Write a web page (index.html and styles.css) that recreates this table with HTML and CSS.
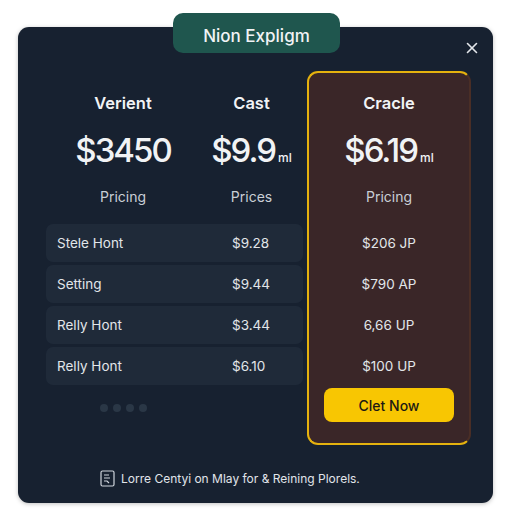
FILE: index.html
```html
<!DOCTYPE html>
<html lang="en">
<head>
    <meta charset="UTF-8">
    <title>Nion Expligm</title>
    <link rel="stylesheet" href="styles.css">
</head>
<body>
    <div class="modal">
        <div class="tab">Nion Expligm</div>
        <button class="close" aria-label="Close">
            <svg width="12" height="12" viewBox="0 0 12 12" stroke="currentColor" stroke-width="1.6" stroke-linecap="round">
                <line x1="1.5" y1="1.5" x2="10.5" y2="10.5"/>
                <line x1="10.5" y1="1.5" x2="1.5" y2="10.5"/>
            </svg>
        </button>

        <div class="plans">
            <div class="plans-left">
                <div class="head">
                    <div class="plan">
                        <div class="name">Verient</div>
                        <div class="price">$3450</div>
                        <div class="label">Pricing</div>
                    </div>
                    <div class="plan">
                        <div class="name">Cast</div>
                        <div class="price">$9.9<span class="unit">ml</span></div>
                        <div class="label">Prices</div>
                    </div>
                </div>
                <div class="rows">
                    <div class="row"><span>Stele Hont</span><span>$9.28</span></div>
                    <div class="row"><span>Setting</span><span>$9.44</span></div>
                    <div class="row"><span>Relly Hont</span><span>$3.44</span></div>
                    <div class="row"><span>Relly Hont</span><span>$6.10</span></div>
                </div>
                <div class="dots">
                    <i></i><i></i><i></i><i></i>
                </div>
            </div>

            <div class="plans-right">
                <div class="plan">
                    <div class="name">Cracle</div>
                    <div class="price">$6.19<span class="unit">ml</span></div>
                    <div class="label">Pricing</div>
                </div>
                <div class="rows">
                    <div class="row">$206 JP</div>
                    <div class="row">$790 AP</div>
                    <div class="row">6,66 UP</div>
                    <div class="row">$100 UP</div>
                </div>
                <button class="cta">Clet Now</button>
            </div>
        </div>

        <div class="footer">
            <svg width="15" height="17" viewBox="0 0 15 17" fill="none" stroke="#cfd5dc" stroke-width="1.2">
                <rect x="1" y="1" width="13" height="15" rx="1.5"/>
                <path d="M4 5h5M4 8h6M4 11h3l2 2"/>
            </svg>
            <span>Lorre Centyi on Mlay for &amp; Reining Plorels.</span>
        </div>
    </div>
</body>
</html>
```

FILE: styles.css
```css
:root {
    --card: #172130;
    --row: #1f2a39;
    --hl: #3a2628;
    --gold: #e5b20e;
    --tab: #1f564e;
    --fg: #f1f3f5;
    --muted: #c9cfd6;
}

* {
    margin: 0;
    padding: 0;
    box-sizing: border-box;
}

body {
    background: #ffffff;
    font-family: Inter, "Open Sans", sans-serif;
    padding: 27px 19px 9px 18px;
}

.modal {
    position: relative;
    width: 475px;
    height: 476px;
    background: var(--card);
    border-radius: 11px;
    box-shadow: 0 1px 4px rgba(0, 0, 0, 0.25);
    padding: 44px 22px 0 28px;
    display: flex;
    flex-direction: column;
}

.tab {
    position: absolute;
    top: -14px;
    left: 155px;
    width: 167px;
    height: 40px;
    background: var(--tab);
    border-radius: 10px;
    color: var(--fg);
    font-size: 17px;
    font-weight: 500;
    text-align: center;
    line-height: 46px;
}

.close {
    position: absolute;
    top: 15px;
    right: 15px;
    width: 12px;
    height: 12px;
    border: none;
    background: none;
    color: #e3e6ea;
    display: flex;
}

.plans {
    display: flex;
    gap: 4px;
}

.plans-left {
    width: 257px;
}

.head {
    display: grid;
    grid-template-columns: 154px 103px;
}

.plan {
    text-align: center;
    padding-top: 20px;
    color: var(--fg);
}

.name {
    font-size: 16.5px;
    font-weight: 600;
    line-height: 24px;
}

.price {
    font-size: 33px;
    font-weight: 500;
    letter-spacing: -2px;
    line-height: 40px;
    margin-top: 15px;
    white-space: nowrap;
}

.unit {
    font-size: 12px;
    letter-spacing: 0;
    line-height: 0;
    margin-left: 3px;
}

.label {
    font-size: 14px;
    color: var(--muted);
    line-height: 20px;
    margin-top: 17px;
}

.rows {
    display: flex;
    flex-direction: column;
    gap: 3px;
    margin-top: 17px;
}

.row {
    height: 38px;
    font-size: 13.5px;
    color: #e2e6ea;
    display: flex;
    align-items: center;
}

.plans-left .row {
    background: var(--row);
    border-radius: 7px;
    padding-left: 11px;
}

.plans-left .row span:first-child {
    width: 175px;
}

.dots {
    width: 154px;
    display: flex;
    justify-content: center;
    gap: 5px;
    margin-top: 19px;
}

.dots i {
    width: 8px;
    height: 8px;
    border-radius: 50%;
    background: #2a3746;
}

.plans-right {
    width: 164px;
    height: 374px;
    background: var(--hl);
    border: 2px solid var(--gold);
    border-right-color: #4a2e26;
    border-radius: 11px;
    display: flex;
    flex-direction: column;
    align-items: center;
}

.plans-right .plan {
    padding-top: 18px;
}

.plans-right .rows {
    width: 100%;
}

.plans-right .row {
    justify-content: center;
}

.cta {
    margin-top: 3px;
    width: 130px;
    height: 34px;
    border: none;
    border-radius: 8px;
    background: #f8c602;
    color: #1d1a14;
    font-family: inherit;
    font-size: 14px;
    font-weight: 500;
}

.footer {
    margin-top: auto;
    height: 58px;
    padding: 8px 0 0 54px;
    display: flex;
    align-items: center;
    gap: 6px;
    font-size: 12px;
    color: #e1e5ea;
}
```
